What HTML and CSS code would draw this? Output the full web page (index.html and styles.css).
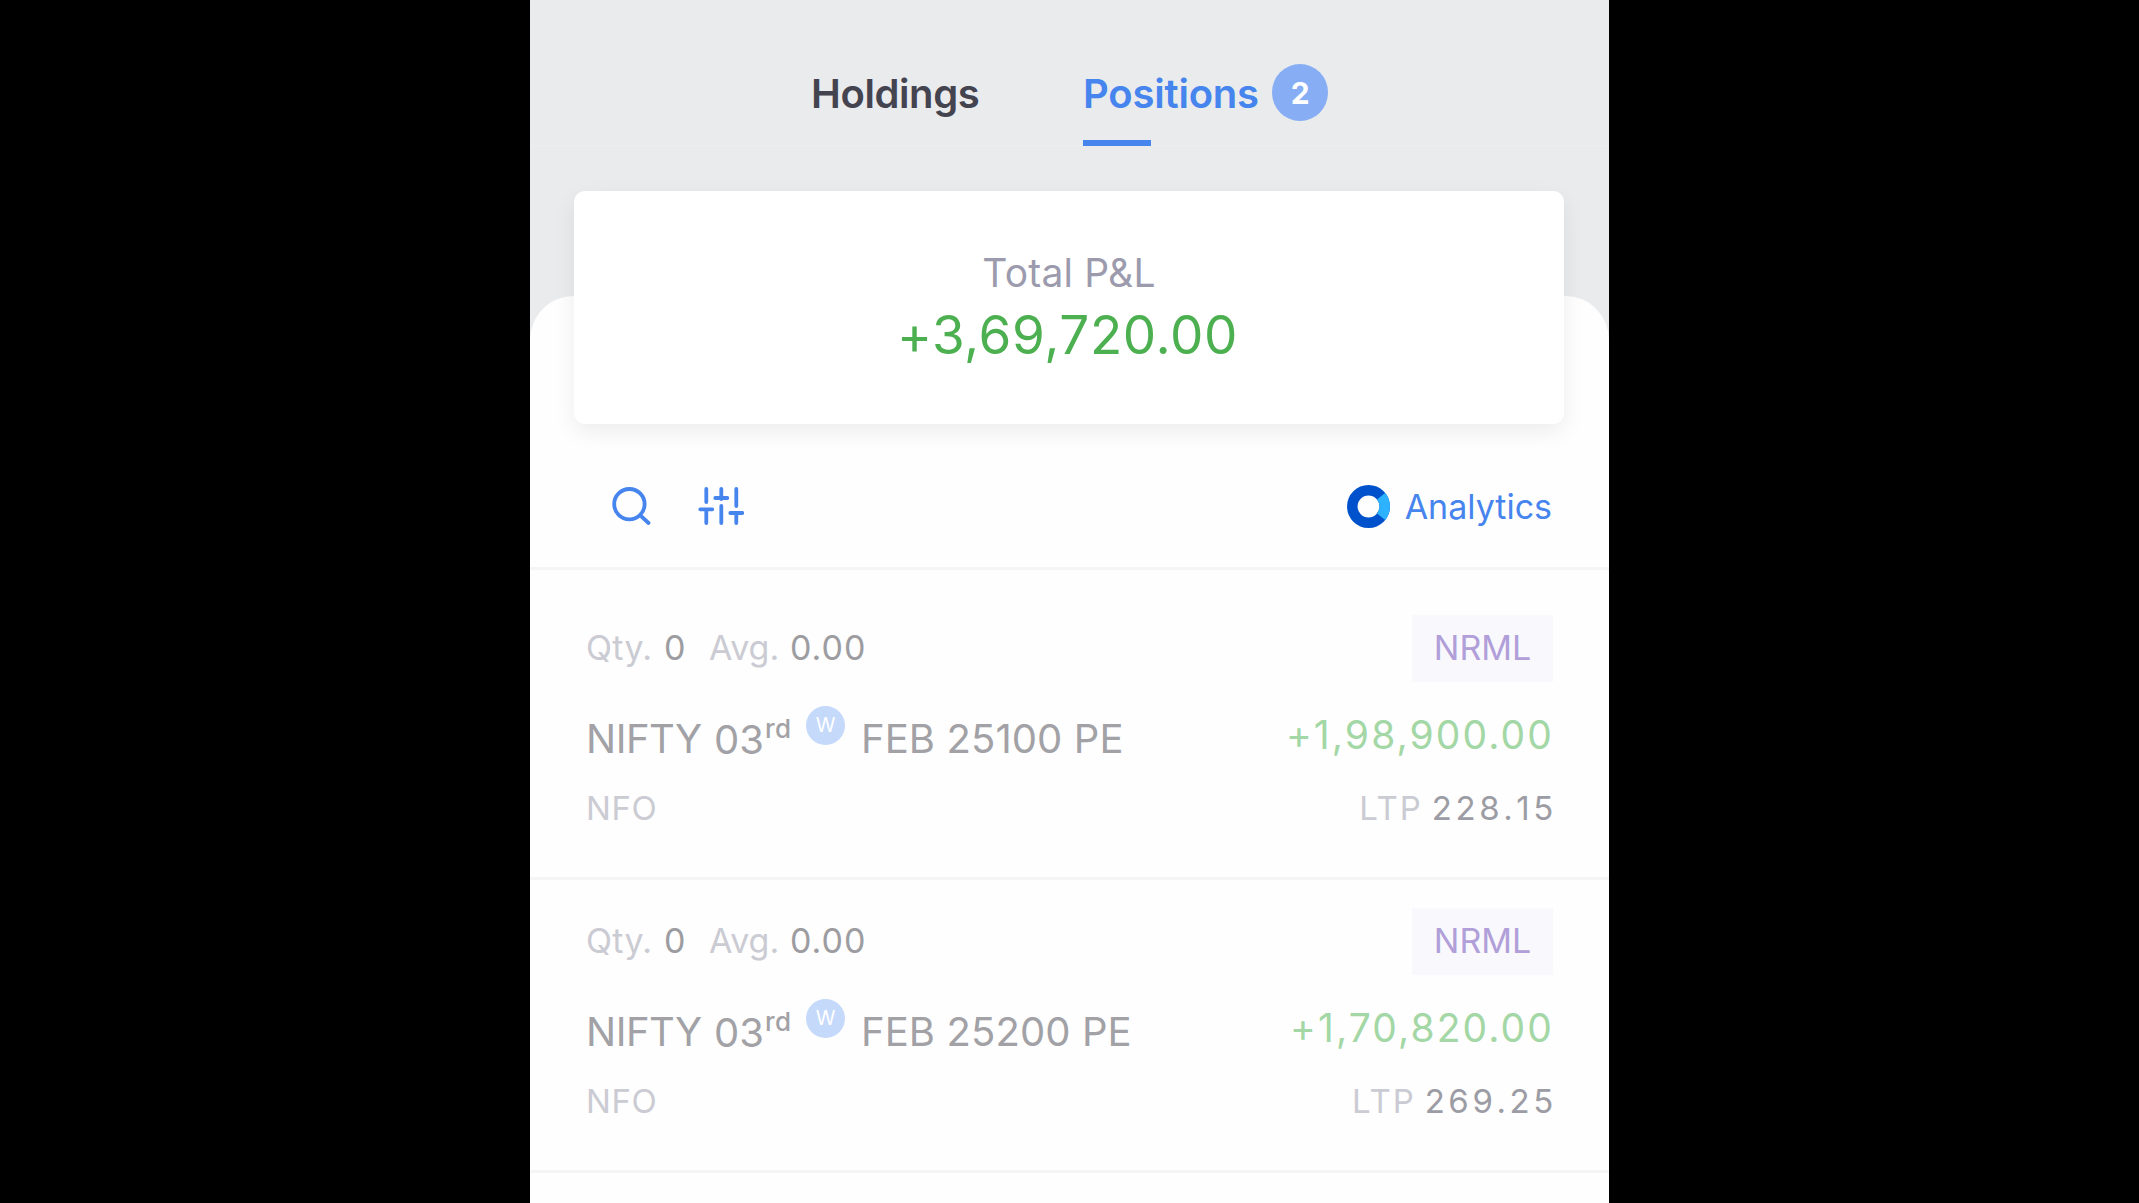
FILE: index.html
```html
<!DOCTYPE html>
<html lang="en">
<head>
    <meta charset="UTF-8">
    <meta name="viewport" content="width=device-width, initial-scale=1.0">
    <title>Positions</title>
    <link rel="stylesheet" href="styles.css">
</head>
<body>
    <div class="phone">
        <header class="header">
            <nav class="tabs">
                <div class="tab tab-holdings">Holdings</div>
                <div class="tab tab-positions active">
                    <div class="tab-label"><span>Positions</span><span class="count">2</span></div>
                </div>
            </nav>
        </header>

        <main class="sheet">
            <section class="summary">
                <div class="summary-label">Total P&amp;L</div>
                <div class="summary-value">+3,69,720.00</div>
            </section>

            <div class="toolbar">
                <svg class="icon-search" width="40" height="40" viewBox="0 0 40 40">
                    <circle cx="18.4" cy="18.2" r="15.2"/>
                    <path d="M29.3 29.3L37.5 37"/>
                </svg>
                <svg class="icon-filter" width="46" height="40" viewBox="0 0 46 40">
                    <path d="M8.3 3v13M8.3 24v13M2.3 23.3h12M23.3 3v10M23.3 20v17M17.3 12h12M38.3 3v17M38.3 28v9M32.3 27h12"/>
                </svg>
                <a class="analytics">
                    <svg class="icon-analytics" width="43" height="43" viewBox="0 0 43 43">
                        <circle cx="21.5" cy="21.5" r="16.2" stroke="#0052cc"/>
                        <path d="M34.1 11.3A16.2 16.2 0 0 1 34.1 31.7" stroke="#2db2ff"/>
                    </svg>
                    <span>Analytics</span>
                </a>
            </div>

            <section class="position">
                <div class="line line-top">
                    <span class="qty muted">Qty.</span><span class="qty-value">0</span>
                    <span class="avg muted">Avg.</span><span class="avg-value">0.00</span>
                    <span class="product">NRML</span>
                </div>
                <div class="line line-mid">
                    <span class="symbol">NIFTY</span><span class="day">03</span><sup class="ordinal">rd</sup>
                    <span class="weekly">W</span>
                    <span class="contract">FEB 25100 PE</span>
                    <span class="pnl">+1,98,900.00</span>
                </div>
                <div class="line line-bottom">
                    <span class="exchange muted">NFO</span>
                    <span class="ltp muted">LTP</span><span class="ltp-value">228.15</span>
                </div>
            </section>

            <section class="position">
                <div class="line line-top">
                    <span class="qty muted">Qty.</span><span class="qty-value">0</span>
                    <span class="avg muted">Avg.</span><span class="avg-value">0.00</span>
                    <span class="product">NRML</span>
                </div>
                <div class="line line-mid">
                    <span class="symbol">NIFTY</span><span class="day">03</span><sup class="ordinal">rd</sup>
                    <span class="weekly">W</span>
                    <span class="contract">FEB 25200 PE</span>
                    <span class="pnl">+1,70,820.00</span>
                </div>
                <div class="line line-bottom">
                    <span class="exchange muted">NFO</span>
                    <span class="ltp muted">LTP</span><span class="ltp-value">269.25</span>
                </div>
            </section>
        </main>
    </div>
</body>
</html>
```
FILE: styles.css
```css
* {
    box-sizing: border-box;
}
body {
    margin: 0;
    background-color: #000;
    font-family: Inter, sans-serif;
}
.phone {
    width: 1079px;
    height: 1203px;
    margin-left: 530px;
    background-color: #e9ebed;
    overflow: hidden;
}

/* tabs */
.header {
    height: 296px;
}
.tabs {
    display: flex;
    height: 146px;
    padding: 64px 0 0 281px;
    border-bottom: 1px solid #edeef0;
    font-size: 40px;
    font-weight: 600;
    line-height: 60px;
    letter-spacing: -0.4px;
    color: #444450;
}
.tab-holdings {
    width: 272px;
}
.tab-label {
    display: flex;
    height: 59px;
}
.tab-label > span:first-child {
    width: 189px;
    letter-spacing: -0.2px;
}
.active {
    color: #4684ee;
}
.active::after {
    content: "";
    display: block;
    width: 68px;
    height: 6px;
    margin-top: 17px;
    background-color: #4684ee;
}
.count {
    width: 56px;
    height: 57px;
    border-radius: 50%;
    background-color: #87adf4;
    color: #fff;
    font-size: 30px;
    font-weight: 700;
    line-height: 59px;
    text-align: center;
}

/* sheet and total */
.sheet {
    height: 907px;
    border-radius: 44px 44px 0 0;
    background-color: #fefefe;
}
.summary {
    position: relative;
    top: -105px;
    height: 233px;
    margin: 0 45px -105px 44px;
    padding-top: 52px;
    border-radius: 11px;
    background-color: #fff;
    box-shadow: 0 8px 22px rgba(0, 0, 0, 0.07);
    text-align: center;
}
.summary-label {
    color: #9c9bad;
    font-size: 39px;
    line-height: 60px;
    letter-spacing: 0.2px;
}
.summary-value {
    color: #4caf50;
    font-size: 53px;
    line-height: 65px;
    letter-spacing: 0.6px;
    padding-right: 3px;
}

/* toolbar */
.toolbar {
    display: flex;
    align-items: center;
    height: 146px;
    padding: 21px 57px 0 81px;
    border-bottom: 3px solid #f5f5f6;
}
.icon-search,
.icon-filter {
    fill: none;
    stroke: #4684ee;
    stroke-width: 3.8;
    stroke-linecap: round;
}
.icon-filter {
    margin-left: 47px;
}
.analytics {
    display: flex;
    align-items: center;
    gap: 15px;
    margin-left: auto;
    color: #4684ee;
    font-size: 34px;
}
.icon-analytics {
    fill: none;
    stroke-width: 10.5;
}

/* position rows */
.position {
    height: 293px;
    padding: 28px 56px 0 56px;
    border-bottom: 3px solid #f5f5f6;
}
.toolbar + .position {
    height: 310px;
    padding-top: 45px;
}
.line {
    display: flex;
    align-items: flex-start;
    color: #9c9ca1;
    white-space: nowrap;
}
.muted {
    color: #cbcbd3;
}
.line-top {
    height: 67px;
    font-size: 34px;
    line-height: 66px;
}
.qty {
    width: 78px;
    letter-spacing: 0.3px;
}
.qty-value {
    width: 45px;
}
.avg {
    width: 81px;
}
.avg-value {
    letter-spacing: 1px;
}
.product {
    width: 141px;
    height: 67px;
    margin-left: auto;
    background-color: #f9f8fd;
    color: #b09fd8;
    text-align: center;
}
.line-mid {
    height: 62px;
    margin-top: 24px;
    color: #a1a1a6;
    font-size: 40px;
    line-height: 66px;
}
.symbol {
    width: 128px;
    letter-spacing: -0.5px;
}
.day {
    width: 51px;
    line-height: 68px;
}
.ordinal {
    width: 41px;
    font-size: 26px;
    font-weight: 500;
    line-height: 45px;
    letter-spacing: 0.5px;
}
.weekly {
    width: 39px;
    height: 39px;
    margin-right: 16px;
    border-radius: 50%;
    background-color: #c5d9fb;
    color: #fff;
    font-size: 20px;
    line-height: 39px;
    text-align: center;
}
.contract {
    letter-spacing: 0.1px;
}
.pnl {
    margin-left: auto;
    margin-right: -1px;
    color: #a3d7a5;
    font-size: 39px;
    line-height: 58px;
    letter-spacing: 2.1px;
}
.line-bottom {
    height: 80px;
    font-size: 33px;
    line-height: 81px;
}
.exchange {
    letter-spacing: 0.6px;
}
.ltp {
    margin-left: auto;
    margin-right: 9px;
    letter-spacing: 1.9px;
}
.ltp-value {
    margin-right: -4px;
    color: #9c9ca4;
    font-kerning: none;
    letter-spacing: 3.6px;
}
```
